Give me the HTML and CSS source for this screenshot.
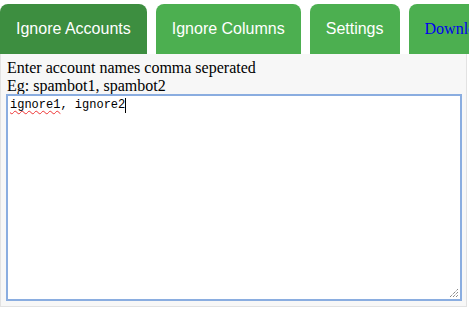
FILE: index.html
```html
<!DOCTYPE html>
<html lang="en">
<head>
    <meta charset="UTF-8">
    <title>Ignore Settings</title>
    <link rel="stylesheet" href="styles.css">
</head>
<body>

<div class="tabs">
    <button class="tab active">Ignore Accounts</button>
    <button class="tab">Ignore Columns</button>
    <button class="tab">Settings</button>
    <button class="tab"><a href="#">Download</a></button>
</div>

<div class="panel">
    <div class="hint">Enter account names comma seperated<br>Eg: spambot1, spambot2</div>
    <div class="editor"><span class="typo">ignore1</span>, ignore2<span class="caret"></span>
        <svg class="grip" width="10" height="10" viewBox="0 0 10 10">
            <path d="M1 9 L9 1 M4 9 L9 4 M7 9 L9 7" stroke="#555" stroke-width="1" stroke-dasharray="1 1" fill="none"/>
        </svg>
    </div>
</div>

</body>
</html>
```

FILE: styles.css
```css
body { margin: 0; background: #fff; font-family: "Liberation Serif", "Times New Roman", serif; overflow: hidden; }
.tabs { display: flex; gap: 9px; padding-top: 4px; white-space: nowrap; }
.tab { flex-shrink: 0; background: #4caf50; color: #fff; border: none; border-radius: 8px 8px 0 0; padding: 16px 16px; font-family: "Liberation Sans", Arial, sans-serif; font-size: 16px; line-height: 18px; cursor: pointer; }
.tab.active { background: #3d8e40; }
.tab a { color: #0000ee; text-decoration: none; font-family: "Liberation Serif", "Times New Roman", serif; }
.panel { width: 456px; background: #f7f7f7; border: 1px solid #e2e2e2; border-top: none; padding: 5px 4px 5px 5px; }
.hint { font-size: 16px; line-height: 18px; color: #000; padding-left: 1px; }
.editor { position: relative; height: 199px; margin-top: -1px; background: #fff; border: 2px solid #8aade0; padding: 2px 2px 2px 2px; font-family: "Liberation Mono", "Courier New", monospace; font-size: 12px; line-height: 15px; color: #000; }
.typo { text-decoration: underline wavy #e33; text-decoration-thickness: 1px; text-underline-offset: 2px; }
.caret { display: inline-block; width: 1px; height: 15px; background: #000; vertical-align: top; }
.grip { position: absolute; right: 1px; bottom: 1px; }
```
